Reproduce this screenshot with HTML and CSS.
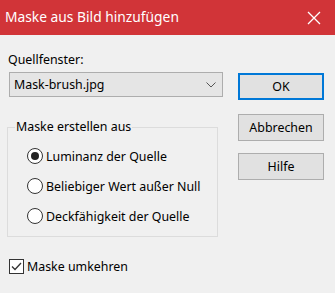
FILE: index.html
```html
<!DOCTYPE html>
<html lang="de">
<head>
<meta charset="utf-8">
<link rel="stylesheet" href="styles.css">
</head>
<body>
<div class="dialog">
  <div class="titlebar">
    <span class="title">Maske aus Bild hinzufügen</span>
    <svg class="close" width="14" height="14" viewBox="0 0 14 14"><path d="M1 1L13 13M13 1L1 13" stroke="#fff" stroke-width="1.3" fill="none"/></svg>
  </div>
  <div class="content">
    <div class="left">
      <div class="label">Quellfenster:</div>
      <div class="select">
        <span>Mask-brush.jpg</span>
        <svg class="chev" width="10" height="6" viewBox="0 0 10 6"><path d="M0.5 0.5L5 5L9.5 0.5" stroke="#555" stroke-width="1" fill="none"/></svg>
      </div>
      <fieldset class="group">
        <legend>Maske erstellen aus</legend>
        <div class="radio-row"><span class="radio checked"></span><span>Luminanz der Quelle</span></div>
        <div class="radio-row"><span class="radio"></span><span>Beliebiger Wert außer Null</span></div>
        <div class="radio-row"><span class="radio"></span><span>Deckfähigkeit der Quelle</span></div>
      </fieldset>
      <div class="check-row">
        <span class="checkbox"><svg width="13" height="13" viewBox="0 0 13 13"><path d="M2 6.5L5 9.5L11 3" stroke="#333" stroke-width="1.3" fill="none"/></svg></span>
        <span>Maske umkehren</span>
      </div>
    </div>
    <div class="right">
      <div class="btn default">OK</div>
      <div class="btn">Abbrechen</div>
      <div class="btn">Hilfe</div>
    </div>
  </div>
</div>
</body>
</html>
```
FILE: styles.css
```css
html, body {
  margin: 0;
  padding: 0;
  background: #f0f0f0;
}
.dialog {
  width: 335px;
  height: 293px;
  background: #f0f0f0;
  font-family: "Noto Sans", "Open Sans", sans-serif;
  font-size: 12.4px;
  color: #000;
  overflow: hidden;
  white-space: nowrap;
}
.titlebar {
  height: 35px;
  background: #d13438;
  color: #fff;
  display: flex;
  align-items: center;
  justify-content: space-between;
  padding: 0 14px 0 5px;
  font-size: 13.8px;
}
.title {
  margin-top: -2px;
}
.close {
  display: block;
}
.content {
  display: flex;
  padding: 0 11px 0 7px;
}
.left {
  width: 211px;
  display: flex;
  flex-direction: column;
}
.label {
  margin: 15px 0 0 1px;
  line-height: 20px;
}
.select {
  margin: 2px 0 0 2px;
  height: 23px;
  border: 1px solid #adadad;
  background: #e5e5e5;
  display: flex;
  align-items: center;
  justify-content: space-between;
  padding: 0 6px 0 4px;
  box-sizing: content-box;
  width: 202px;
}
.chev {
  display: block;
}
.group {
  margin: 20px 0 0 0;
  padding: 4px 0 10px 19px;
  border: 1px solid #dcdcdc;
  height: 120px;
  box-sizing: border-box;
  min-width: 0;
}
.group legend {
  padding: 0 1px;
  margin-left: -12px;
  line-height: 20px;
}
.radio-row {
  display: flex;
  align-items: center;
  height: 30px;
  gap: 3px;
}
.radio {
  width: 16px;
  height: 16px;
  border: 1px solid #333;
  border-radius: 50%;
  box-sizing: border-box;
  background: #fff;
  display: flex;
  align-items: center;
  justify-content: center;
  flex: none;
}
.radio.checked::after {
  content: "";
  width: 8px;
  height: 8px;
  border-radius: 50%;
  background: #222;
}
.check-row {
  display: flex;
  align-items: center;
  gap: 3px;
  margin: 21px 0 0 2px;
}
.checkbox {
  width: 15px;
  height: 15px;
  border: 1px solid #333;
  box-sizing: border-box;
  background: #fff;
  display: flex;
  align-items: center;
  justify-content: center;
  flex: none;
}
.checkbox svg {
  display: block;
}
.right {
  margin-left: 20px;
  width: 86px;
  padding-top: 38px;
  display: flex;
  flex-direction: column;
  gap: 12px;
}
.btn {
  height: 27px;
  box-sizing: border-box;
  border: 1px solid #adadad;
  background: #e1e1e1;
  display: flex;
  align-items: center;
  justify-content: center;
}
.btn.default {
  border: 2px solid #0078d7;
  margin-bottom: 2px;
}
```
